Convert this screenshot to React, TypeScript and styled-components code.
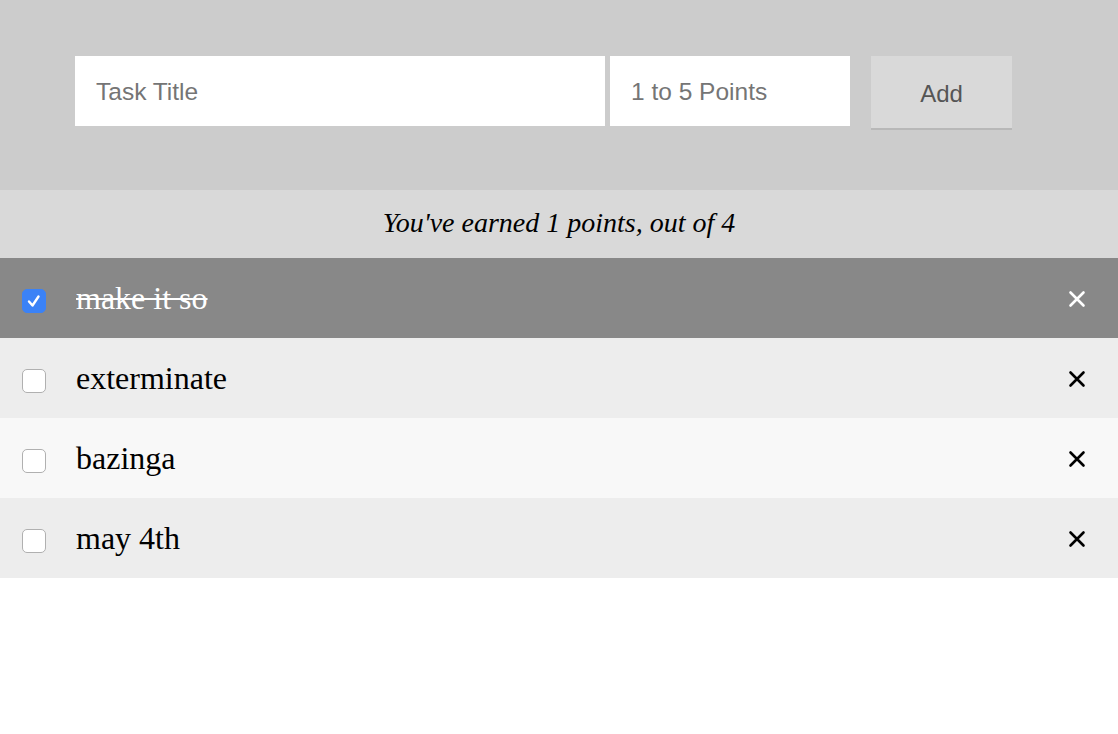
import React, { useState } from "react";
import styled, { createGlobalStyle } from "styled-components";

const Global = createGlobalStyle`
  html, body { margin: 0; padding: 0; background: #fff; }
  body { font-family: "Liberation Serif", "Times New Roman", serif; }
`;

const Header = styled.form`
  background: #cccccc;
  height: 190px;
  box-sizing: border-box;
  padding: 56px 0 0 75px;
  display: flex;
  align-items: flex-start;
`;

const Input = styled.input<{ $w: number }>`
  width: ${(p) => p.$w}px;
  height: 70px;
  box-sizing: border-box;
  border: none;
  outline: none;
  background: #fff;
  padding: 2px 21px 0;
  font-family: "Liberation Sans", Arial, sans-serif;
  font-size: 24.5px;
  color: #333;
  &::placeholder { color: #757575; }
`;

const Gap = styled.div<{ $w: number }>`
  width: ${(p) => p.$w}px;
  flex: none;
`;

const AddButton = styled.button`
  width: 141px;
  height: 72px;
  border: none;
  background: #d9d9d9;
  box-shadow: 0 2px 0 #b8b8b8;
  font-family: "Liberation Sans", Arial, sans-serif;
  font-size: 24px;
  color: #555;
  padding: 4px 0 0;
`;

const Summary = styled.div`
  height: 68px;
  background: #d9d9d9;
  display: flex;
  align-items: center;
  justify-content: center;
  font-style: italic;
  font-size: 28px;
  color: #000;
  padding-bottom: 3px;
  box-sizing: border-box;
`;

const List = styled.ul`
  list-style: none;
  margin: 0;
  padding: 0;
`;

const Row = styled.li<{ $bg: string; $done: boolean }>`
  height: 80px;
  background: ${(p) => p.$bg};
  display: flex;
  align-items: center;
  padding: 0 32px 0 22px;
  color: ${(p) => (p.$done ? "#fff" : "#000")};
`;

const Box = styled.span<{ $on: boolean }>`
  width: 24px;
  height: 24px;
  box-sizing: border-box;
  border-radius: 5px;
  margin-top: 6px;
  flex: none;
  display: flex;
  align-items: center;
  justify-content: center;
  background: ${(p) => (p.$on ? "#3b82f6" : "#fff")};
  border: 1px solid ${(p) => (p.$on ? "#3b82f6" : "#b0b0b0")};
  cursor: pointer;
`;

const Title = styled.span<{ $done: boolean }>`
  flex: 1;
  margin-left: 30px;
  font-size: 32px;
  text-decoration: ${(p) => (p.$done ? "line-through" : "none")};
  text-decoration-thickness: 2px;
`;

const Close = styled.span`
  width: 18px;
  height: 18px;
  display: flex;
  margin-top: 2px;
`;

type Task = { title: string; done: boolean };

const bgs = ["#ededed", "#f8f8f8"];

export default function App() {
  const [tasks, setTasks] = useState<Task[]>([
    { title: "make it so", done: true },
    { title: "exterminate", done: false },
    { title: "bazinga", done: false },
    { title: "may 4th", done: false },
  ]);
  const earned = tasks.filter((t) => t.done).length;
  return (
    <>
      <Global />
      <Header onSubmit={(e) => e.preventDefault()}>
        <Input $w={530} placeholder="Task Title" />
        <Gap $w={5} />
        <Input $w={240} placeholder="1 to 5 Points" />
        <Gap $w={21} />
        <AddButton type="submit">Add</AddButton>
      </Header>
      <Summary>
        You've earned {earned} points, out of {tasks.length}
      </Summary>
      <List>
        {tasks.map((t, i) => (
          <Row key={t.title} $done={t.done} $bg={t.done ? "#888888" : bgs[(i + 1) % 2]}>
            <Box
              $on={t.done}
              onClick={() =>
                setTasks(tasks.map((x, j) => (j === i ? { ...x, done: !x.done } : x)))
              }
            >
              {t.done && (
                <svg width="18" height="18" viewBox="0 0 18 18">
                  <path d="M4 9.5 L7.5 13.5 L13.5 4.5" fill="none" stroke="#fff" strokeWidth="2.4" strokeLinecap="round" strokeLinejoin="round" />
                </svg>
              )}
            </Box>
            <Title $done={t.done}>{t.title}</Title>
            <Close>
              <svg width="18" height="18" viewBox="0 0 18 18">
                <path d="M2.5 2.5 L15.5 15.5 M15.5 2.5 L2.5 15.5" stroke={t.done ? "#fff" : "#000"} strokeWidth="2.6" strokeLinecap="round" />
              </svg>
            </Close>
          </Row>
        ))}
      </List>
    </>
  );
}
